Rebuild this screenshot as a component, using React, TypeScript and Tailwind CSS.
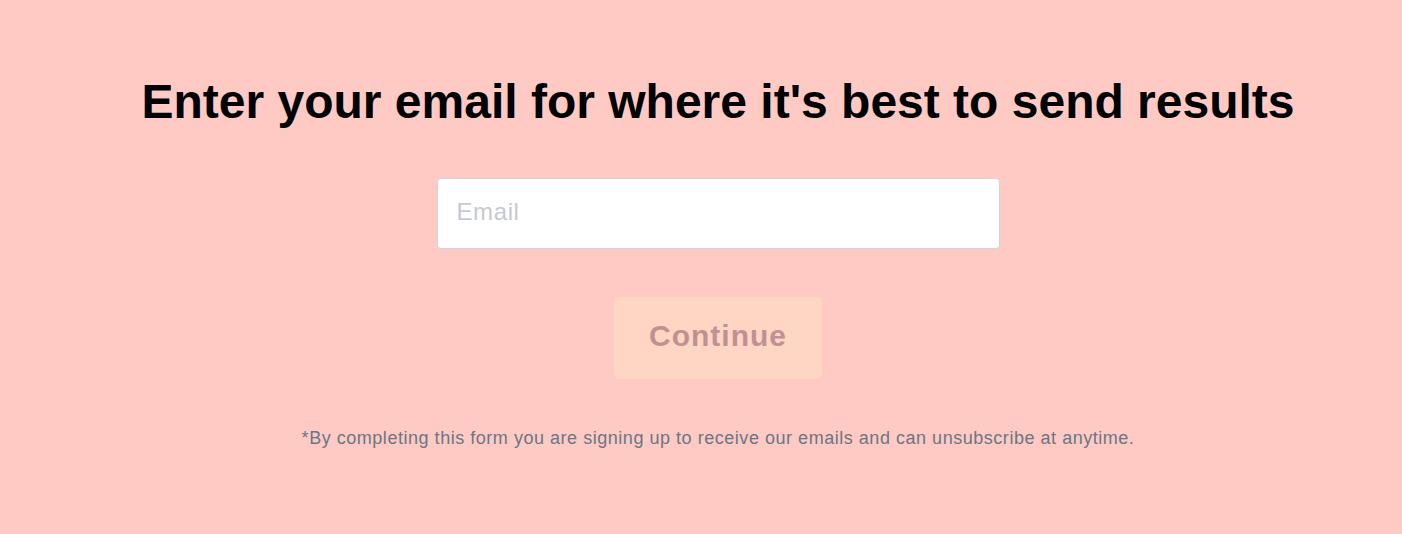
export default function App() {
  return (
    <div className="min-h-screen w-full bg-[#ffcac4] font-['Liberation_Sans',Arial,sans-serif]">
      <div className="flex flex-col items-center pl-[34px] pt-[72px]">
        <h1 className="text-[48px] font-bold leading-[60px] text-black">
          Enter your email for where it's best to send results
        </h1>

        <input
          type="email"
          placeholder="Email"
          className="mt-[46px] h-[71px] w-[563px] rounded-[4px] border border-[#d0d5db] bg-white px-[19px] pb-[3px] text-[24px] tracking-[0.6px] text-gray-800 placeholder:text-[#c5cad2] outline-none"
        />

        <button
          disabled
          className="mt-[48px] h-[82px] w-[208px] rounded-[5px] bg-[#ffd5c4] pb-[5px] text-[30px] font-bold tracking-[1px] text-[#c19191]"
        >
          Continue
        </button>

        <p className="mt-[46px] text-[18px] tracking-[0.53px] text-[#687785]">
          *By completing this form you are signing up to receive our emails and can unsubscribe at anytime.
        </p>
      </div>
    </div>
  );
}
